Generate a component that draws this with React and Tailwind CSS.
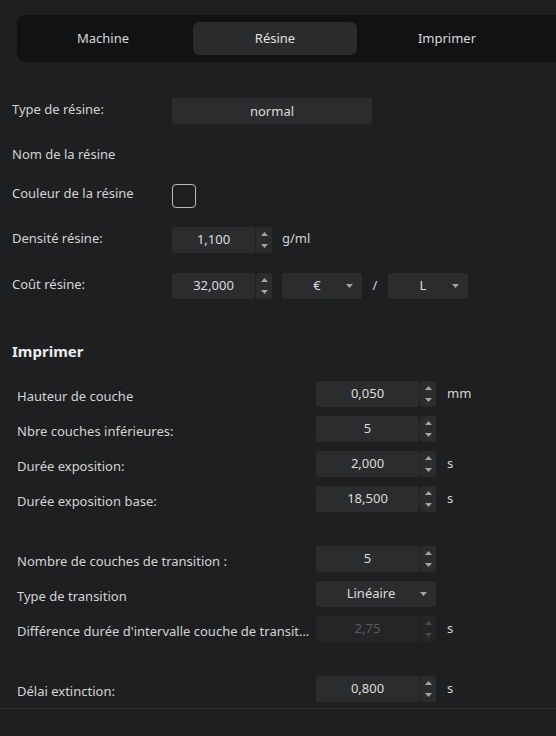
import React from 'react';

const Up = ({ dim }) => (
  <svg width="7" height="4" viewBox="0 0 7 4">
    <polygon points="0,4 3.5,0 7,4" fill={dim ? '#4a4b4d' : '#a4a4a4'} />
  </svg>
);

const Down = ({ dim }) => (
  <svg width="7" height="4" viewBox="0 0 7 4">
    <polygon points="0,0 7,0 3.5,4" fill={dim ? '#4a4b4d' : '#a4a4a4'} />
  </svg>
);

const SpinBox = ({ value, width = 'w-[83px]', disabled }) => (
  <div className="flex h-[26px] gap-px">
    <div
      className={`${width} h-full rounded-[3px] flex items-center justify-center ${
        disabled ? 'bg-[#242527] text-[#5a5b5d]' : 'bg-[#2b2c2e] text-[#dcdcdc]'
      }`}
    >
      {value}
    </div>
    <div
      className={`w-[16px] h-full rounded-[3px] flex flex-col items-center justify-between py-[5px] ${
        disabled ? 'bg-[#242527]' : 'bg-[#2b2c2e]'
      }`}
    >
      <Up dim={disabled} />
      <Down dim={disabled} />
    </div>
  </div>
);

const Select = ({ value, width, arrow = true }) => (
  <div className={`${width} h-[26px] rounded-[3px] bg-[#2b2c2e] flex items-center text-[#dcdcdc] relative`}>
    <span className={`flex-1 text-center ${arrow ? 'pr-[10px]' : 'pt-[2px]'}`}>{value}</span>
    {arrow && (
      <span className="absolute right-[9px] top-[11px]">
        <Down />
      </span>
    )}
  </div>
);

const Row1 = ({ label, children, className = '' }) => (
  <div className={`flex items-center h-[26px] ${className}`}>
    <div className="w-[160px] shrink-0 -mt-[3px]">{label}</div>
    {children}
  </div>
);

const Row2 = ({ label, children, unit, className = '' }) => (
  <div className={`flex items-center h-[26px] ${className}`}>
    <div className="w-[299px] shrink-0 mt-[6px] whitespace-nowrap">{label}</div>
    {children}
    {unit && <span className="ml-[11px]">{unit}</span>}
  </div>
);

export default function App() {
  const tabs = ['Machine', 'Résine', 'Imprimer'];
  return (
    <div className="w-[556px] h-[736px] overflow-hidden bg-[#1e1f21] text-[#d4d4d4] text-[13px] font-['Noto_Sans',sans-serif]">
      {/* Tabs */}
      <div className="pt-[15px] pl-[17px]">
        <div className="w-[600px] h-[47px] bg-[#111214] rounded-l-lg flex items-center gap-2 px-1">
          {tabs.map((t) => (
            <div
              key={t}
              className={`w-[164px] h-[33px] rounded-md flex items-center justify-center ${
                t === 'Résine' ? 'bg-[#2a2b2d] text-[#e0e0e0]' : 'text-[#d8d8d8]'
              }`}
            >
              {t}
            </div>
          ))}
        </div>
      </div>

      {/* Résine */}
      <div className="px-3 mt-[36px] flex flex-col">
        <Row1 label="Type de résine:">
          <Select value="normal" width="w-[200px]" arrow={false} />
        </Row1>
        <Row1 label="Nom de la résine" className="mt-[19px]" />
        <Row1 label="Couleur de la résine" className="mt-[13px]">
          <div className="w-[24px] h-[24px] rounded-[4px] border border-[#b8b8b8] mt-[2px]" />
        </Row1>
        <Row1 label="Densité résine:" className="mt-[19px]">
          <SpinBox value="1,100" />
          <span className="ml-[10px] -mt-[2px]">g/ml</span>
        </Row1>
        <Row1 label="Coût résine:" className="mt-[20px]">
          <SpinBox value="32,000" />
          <div className="ml-[10px]">
            <Select value="€" width="w-[80px]" />
          </div>
          <span className="w-[26px] text-center">/</span>
          <Select value="L" width="w-[80px]" />
        </Row1>
      </div>

      {/* Imprimer */}
      <div className="px-3 mt-[42px] text-[15px] font-bold text-[#ececec] leading-[20px]">Imprimer</div>

      <div className="px-[17px] mt-[20px] pb-[6px] border-b border-[#2f3032] flex flex-col gap-[9px]">
        <Row2 label="Hauteur de couche" unit="mm">
          <SpinBox value="0,050" width="w-[103px]" />
        </Row2>
        <Row2 label="Nbre couches inférieures:">
          <SpinBox value="5" width="w-[103px]" />
        </Row2>
        <Row2 label="Durée exposition:" unit="s">
          <SpinBox value="2,000" width="w-[103px]" />
        </Row2>
        <Row2 label="Durée exposition base:" unit="s">
          <SpinBox value="18,500" width="w-[103px]" />
        </Row2>
        <Row2 label="Nombre de couches de transition :" className="mt-[25px]">
          <SpinBox value="5" width="w-[103px]" />
        </Row2>
        <Row2 label="Type de transition">
          <Select value="Linéaire" width="w-[120px]" />
        </Row2>
        <Row2 label="Différence durée d'intervalle couche de transit…" unit="s">
          <SpinBox value="2,75" width="w-[103px]" disabled />
        </Row2>
        <Row2 label="Délai extinction:" unit="s" className="mt-[25px]">
          <SpinBox value="0,800" width="w-[103px]" />
        </Row2>
      </div>
    </div>
  );
}
